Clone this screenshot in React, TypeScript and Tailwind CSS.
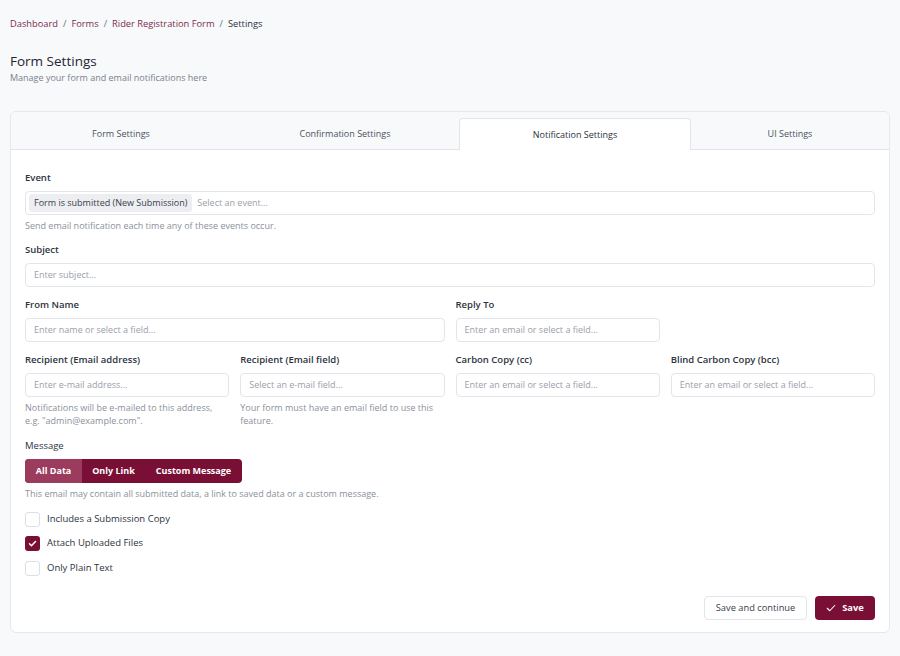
import React from "react";

const MAROON = "bg-[#7a0f35]";

function Label({ children }: { children: React.ReactNode }) {
  return <div className="text-[9.5px] leading-[14px] font-semibold text-[#2d3340]">{children}</div>;
}

function Input({ placeholder }: { placeholder: string }) {
  return (
    <div className="mt-[6px] h-[24px] rounded-[4px] border border-[#e3e5ea] bg-white flex items-center px-[8px] text-[9px] text-[#9aa0aa]">
      {placeholder}
    </div>
  );
}

function Help({ children }: { children: React.ReactNode }) {
  return <div className="mt-[4px] text-[9px] leading-[13px] text-[#8b919b]">{children}</div>;
}

function Checkbox({ checked, label }: { checked?: boolean; label: string }) {
  return (
    <div className="flex items-center gap-[7px] h-[16px]">
      {checked ? (
        <div className="w-[15px] h-[15px] rounded-[3px] bg-[#7a0f35] flex items-center justify-center">
          <svg width="9" height="9" viewBox="0 0 12 12" fill="none">
            <path d="M2 6.3l2.6 2.6L10 3.3" stroke="white" strokeWidth="2" strokeLinecap="round" strokeLinejoin="round" />
          </svg>
        </div>
      ) : (
        <div className="w-[15px] h-[15px] rounded-[3px] border border-[#dcdfe4] bg-white" />
      )}
      <span className="text-[9.5px] text-[#2d3340]">{label}</span>
    </div>
  );
}

export default function App() {
  return (
    <div
      className="w-[900px] h-[656px] bg-[#f8f9fb] px-[10px] pt-[17px]"
      style={{ fontFamily: '"Open Sans", "Noto Sans", sans-serif' }}
    >
      <div className="flex items-center gap-[5px] text-[9.3px] leading-[14px]">
        <span className="text-[#7c2a4e]">Dashboard</span>
        <span className="text-[#6b7280]">/</span>
        <span className="text-[#7c2a4e]">Forms</span>
        <span className="text-[#6b7280]">/</span>
        <span className="text-[#7c2a4e]">Rider Registration Form</span>
        <span className="text-[#6b7280]">/</span>
        <span className="text-[#2d3340] font-medium">Settings</span>
      </div>

      <div className="mt-[21px] text-[13.5px] leading-[18px] text-[#1f2430]">Form Settings</div>
      <div className="mt-[1px] text-[9px] leading-[14px] text-[#7b818b]">Manage your form and email notifications here</div>

      <div className="mt-[26px] w-[880px] h-[522px] rounded-[6px] border border-[#e6e8ec] bg-white overflow-hidden flex flex-col">
        <div className="h-[38px] bg-[#f8f9fb] border-b border-[#e3e5ea] flex items-end text-[9px] text-[#4b5260]">
          <div className="w-[220px] h-[32px] pt-[2px] flex items-center justify-center">Form Settings</div>
          <div className="w-[228px] h-[32px] pt-[2px] flex items-center justify-center">Confirmation Settings</div>
          <div className="w-[232px] h-[32px] -mb-px bg-white border border-b-0 border-[#e3e5ea] rounded-t-[4px] flex items-center justify-center text-[#2d3340]">
            Notification Settings
          </div>
          <div className="flex-1 h-[32px] pt-[2px] flex items-center justify-center">UI Settings</div>
        </div>

        <div className="px-[14px] pt-[21px] flex-1 flex flex-col">
          <Label>Event</Label>
          <div className="mt-[6px] h-[24px] rounded-[4px] border border-[#e3e5ea] bg-white flex items-center px-[3px] text-[9px]">
            <span className="bg-[#eceef1] rounded-[3px] px-[5px] h-[18px] flex items-center text-[#3a404b]">
              Form is submitted (New Submission)
            </span>
            <span className="ml-[5px] text-[#9aa0aa]">Select an event...</span>
          </div>
          <Help>Send email notification each time any of these events occur.</Help>

          <div className="mt-[11px]">
            <Label>Subject</Label>
            <Input placeholder="Enter subject..." />
          </div>

          <div className="mt-[11px] grid grid-cols-2 gap-x-[11px]">
            <div>
              <Label>From Name</Label>
              <Input placeholder="Enter name or select a field..." />
            </div>
            <div className="grid grid-cols-2 gap-x-[11px]">
              <div>
                <Label>Reply To</Label>
                <Input placeholder="Enter an email or select a field..." />
              </div>
            </div>
          </div>

          <div className="mt-[11px] grid grid-cols-4 gap-x-[11px]">
            <div>
              <Label>Recipient (Email address)</Label>
              <Input placeholder="Enter e-mail address..." />
              <Help>Notifications will be e-mailed to this address, e.g. "admin@example.com".</Help>
            </div>
            <div>
              <Label>Recipient (Email field)</Label>
              <Input placeholder="Select an e-mail field..." />
              <Help>Your form must have an email field to use this feature.</Help>
            </div>
            <div>
              <Label>Carbon Copy (cc)</Label>
              <Input placeholder="Enter an email or select a field..." />
            </div>
            <div>
              <Label>Blind Carbon Copy (bcc)</Label>
              <Input placeholder="Enter an email or select a field..." />
            </div>
          </div>

          <div className="mt-[12px] text-[9.5px] leading-[14px] text-[#2d3340]">Message</div>
          <div className={`mt-[6px] flex w-[217px] h-[24px] rounded-[4px] overflow-hidden ${MAROON} text-[9px] font-bold text-white`}>
            <div className="w-[57px] bg-[#9b3b5e] flex items-center justify-center">All Data</div>
            <div className="w-[63px] flex items-center justify-center">Only Link</div>
            <div className="flex-1 flex items-center justify-center">Custom Message</div>
          </div>
          <Help>This email may contain all submitted data, a link to saved data or a custom message.</Help>

          <div className="mt-[11px] flex flex-col gap-[8.5px]">
            <Checkbox label="Includes a Submission Copy" />
            <Checkbox checked label="Attach Uploaded Files" />
            <Checkbox label="Only Plain Text" />
          </div>

          <div className="mt-[20px] flex justify-end gap-[8px]">
            <div className="h-[24px] w-[103px] rounded-[4px] border border-[#e3e5ea] bg-white flex items-center justify-center text-[9.3px] font-medium text-[#3a404b]">
              Save and continue
            </div>
            <div className={`h-[24px] w-[60px] rounded-[4px] ${MAROON} flex items-center justify-center gap-[6px] text-[9.3px] font-bold text-white`}>
              <svg width="10" height="10" viewBox="0 0 12 12" fill="none">
                <path d="M1.5 6.3l3 3L10.5 3" stroke="white" strokeWidth="1.3" strokeLinecap="round" strokeLinejoin="round" />
              </svg>
              Save
            </div>
          </div>
        </div>
      </div>
    </div>
  );
}
